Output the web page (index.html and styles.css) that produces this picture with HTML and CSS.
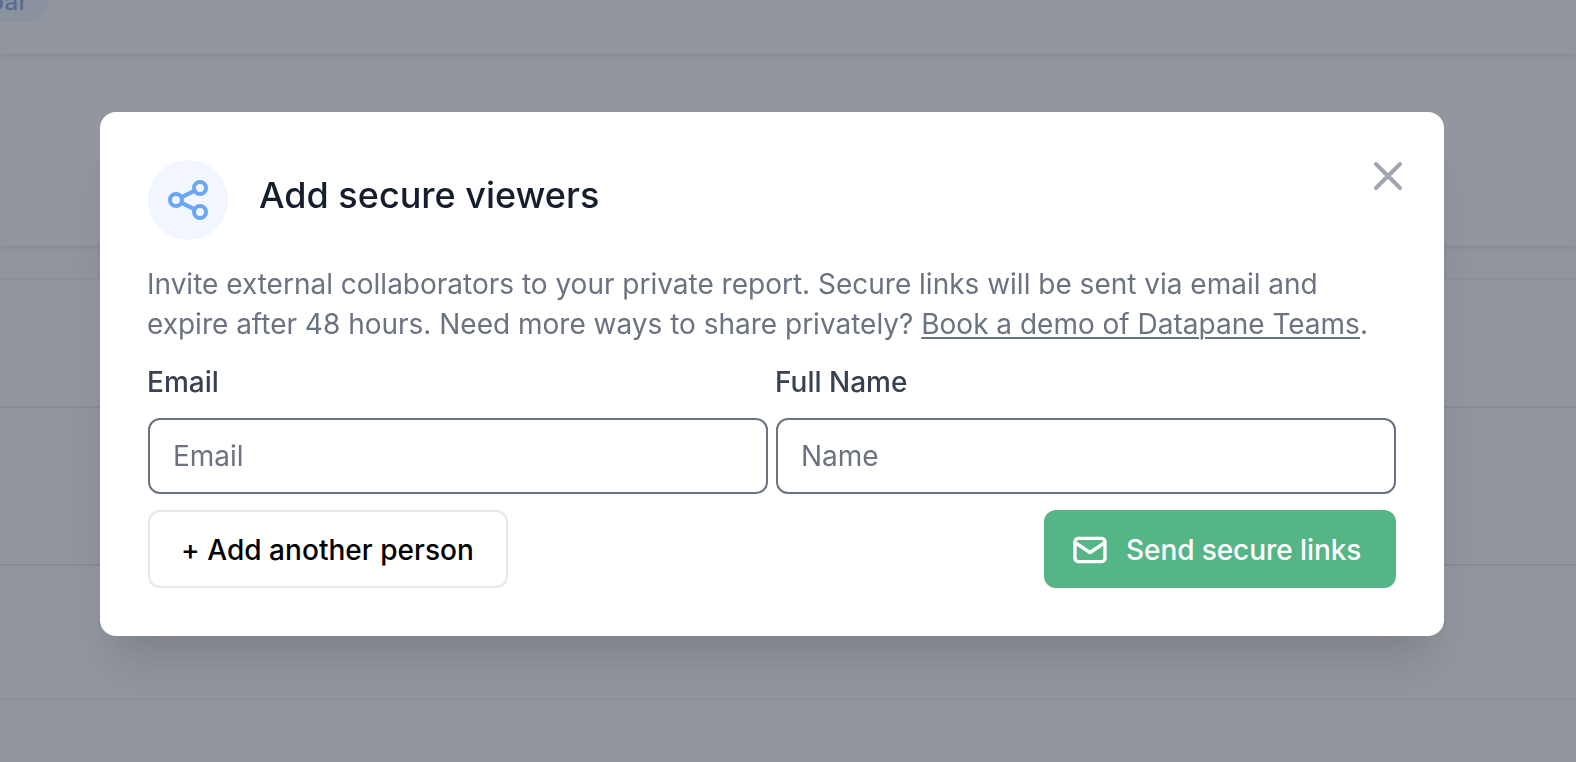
FILE: index.html
```
<!DOCTYPE html>
<html lang="en">
<head>
<meta charset="utf-8">
<title>Add secure viewers</title>
<link rel="stylesheet" href="styles.css">
</head>
<body>
<main class="page">
  <header class="topbar"><span class="chip">bar</span></header>
  <div class="gap"></div>
  <section class="panel"></section>
  <div class="gap gap-under"></div>
  <section class="row row-a"></section>
  <section class="row row-b"></section>
  <section class="row row-c"></section>
  <section class="row row-d"></section>
</main>
<div class="overlay">
  <div class="dialog" role="dialog" aria-labelledby="title">
    <button class="close" aria-label="Close">
      <svg viewBox="0 0 24 24"><path d="M6 18L18 6M6 6l12 12"/></svg>
    </button>
    <div class="head">
      <span class="badge">
        <svg viewBox="0 0 24 24"><circle cx="6" cy="12" r="3"/><circle cx="18" cy="6" r="3"/><circle cx="18" cy="18" r="3"/><path d="M8.7 10.7l6.6-3.4M8.7 13.3l6.6 3.4"/></svg>
      </span>
      <h1 class="title" id="title">Add secure viewers</h1>
    </div>
    <p class="text">Invite external collaborators to your private report. Secure links will be sent via email and<br>expire after 48 hours. Need more ways to share privately? <a class="link" href="#">Book a demo of Datapane Teams</a>.</p>
    <form class="fields">
      <label class="field"><span class="label">Email</span><input class="input" type="email" placeholder="Email"></label>
      <label class="field"><span class="label">Full Name</span><input class="input" type="text" placeholder="Name"></label>
    </form>
    <div class="actions">
      <button class="btn btn-plain">+ Add another person</button>
      <button class="btn btn-send">
        <svg viewBox="0 0 24 24"><rect x="3" y="5" width="18" height="14" rx="2"/><path d="M3 7.5l9 6 9-6"/></svg>
        <span>Send secure links</span>
      </button>
    </div>
  </div>
</div>
</body>
</html>
```
FILE: styles.css
```
* { box-sizing: border-box; }
body {
  margin: 0;
  height: 762px;
  overflow: hidden;
  font-family: Inter, sans-serif;
  font-size: 28px;
  line-height: 40px;
  background: #fff;
}
svg { display: block; fill: none; stroke: currentColor; stroke-width: 2; stroke-linecap: round; stroke-linejoin: round; }

.page { height: 762px; display: flex; flex-direction: column; background: #f9fafb; }
.topbar { position: relative; height: 54px; background: #fff; box-shadow: 0 2px 4px rgba(20, 30, 70, .12), 0 2px 2px rgba(20, 30, 70, .06); }
.chip {
  display: block;
  width: 68px;
  height: 40px;
  margin: -18px 0 0 -20px;
  padding-right: 20px;
  border-radius: 20px;
  background: #e1effe;
  color: #1e55c8;
  font-size: 24px;
  font-weight: 500;
  line-height: 40px;
  letter-spacing: .3px;
  text-align: right;
}
.gap { height: 32px; }
.panel { position: relative; height: 160px; background: #fff; box-shadow: 0 2px 4px rgba(20, 30, 70, .12), 0 2px 2px rgba(20, 30, 70, .06); }
.gap-under { height: 34px; border-bottom: 2px solid #e2e6ee; }
.row { background: #fff; border-bottom: 2px solid #d3d7e2; }
.row-a { height: 128px; }
.row-b { height: 158px; background: #f9fafb; }
.row-c { height: 134px; border-color: #e4e7ee; }
.row-d { height: 62px; border: 0; background: #f9fafb; }

.overlay {
  position: fixed;
  inset: 0;
  display: flex;
  align-items: flex-start;
  padding: 112px 0 0 100px;
  background: rgba(109, 115, 127, .75);
}
.dialog {
  position: relative;
  width: 1344px;
  height: 524px;
  padding: 48px;
  border-radius: 16px;
  background: #fff;
  box-shadow: 0 40px 50px -10px rgba(0, 0, 0, .1), 0 20px 20px -10px rgba(0, 0, 0, .04);
}
.close {
  position: absolute;
  top: 40px;
  right: 32px;
  padding: 0;
  border: 0;
  background: none;
  color: #9fa6b2;
}
.close svg { width: 48px; height: 48px; }
.head { display: flex; gap: 31px; height: 80px; }
.badge {
  display: flex;
  align-items: center;
  justify-content: center;
  width: 80px;
  height: 80px;
  border-radius: 50%;
  background: #f1f6ff;
  color: #6ba6f6;
}
.badge svg { width: 48px; height: 48px; }
.title { margin: 11px 0 0; font-size: 36px; font-weight: 500; line-height: 48px; color: #161e2e; }
.text { margin: 24px 0 0 -1px; color: #6b7280; white-space: nowrap; letter-spacing: -.005px; }
.link { color: inherit; text-decoration: underline; text-decoration-thickness: 2px; text-underline-offset: 3px; }
.fields { display: flex; gap: 8px; margin-top: 18px; }
.field { flex: 1; display: flex; flex-direction: column; gap: 16px; }
.label { margin-left: -1px; font-weight: 500; color: #374151; }
.input {
  width: 100%;
  height: 76px;
  padding: 0 23px;
  border: 2px solid #6b7280;
  border-radius: 12px;
  background: #fff;
  font: inherit;
}
.input::placeholder { color: #6b7280; opacity: 1; }
.actions { display: flex; justify-content: space-between; margin-top: 16px; }
.btn {
  display: flex;
  align-items: center;
  height: 78px;
  padding: 2px 0 0;
  border: 0;
  border-radius: 12px;
  font: 500 28px/40px Inter, sans-serif;
  white-space: nowrap;
}
.btn-plain { width: 360px; padding-left: 31px; border: 2px solid #e5e7eb; background: #fff; color: #000; letter-spacing: .04px; }
.btn-send { width: 352px; gap: 16px; padding-left: 26px; background: #56b586; color: #fff; letter-spacing: -.08px; }
.btn-send svg { width: 40px; height: 40px; }
```
